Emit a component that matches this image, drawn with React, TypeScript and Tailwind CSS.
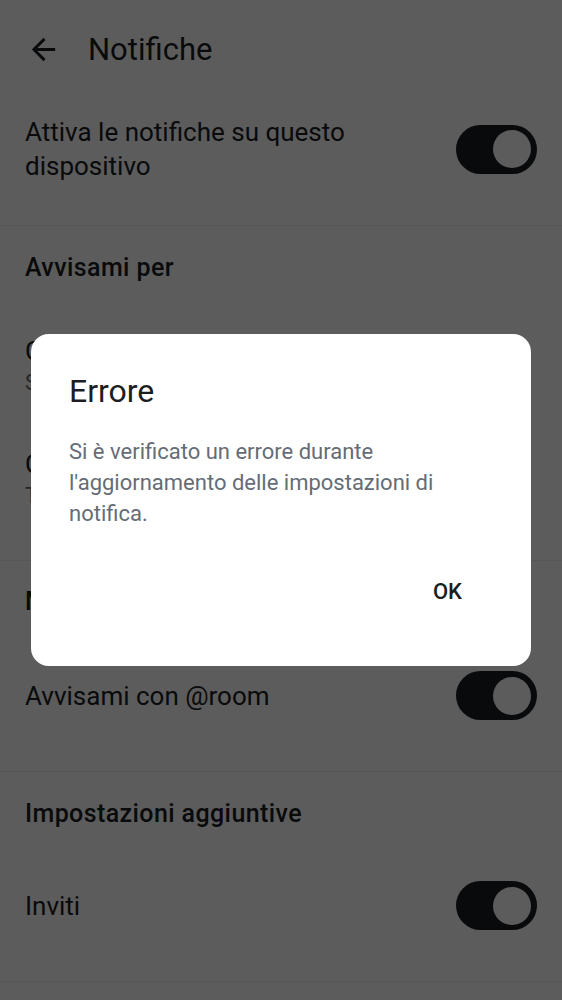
import React from 'react';

const Toggle: React.FC = () => (
  <div className="w-[81px] h-[49px] rounded-full bg-[#1b1d22] flex items-center justify-end pr-[6px] shrink-0">
    <div className="w-[38px] h-[38px] rounded-full bg-white" />
  </div>
);

const Divider: React.FC = () => <div className="h-px bg-[#eeeeee]" />;

const SectionTitle: React.FC<{ children: React.ReactNode; className?: string }> = ({ children, className }) => (
  <div className={`px-[25px] text-[25px] leading-[30px] font-medium tracking-[0.4px] text-[#1b1d22] ${className ?? ''}`}>
    {children}
  </div>
);

export default function App() {
  return (
    <div className="relative w-full h-[1000px] overflow-hidden bg-white font-['Roboto',_sans-serif] text-[#1b1d22]">
      {/* Top bar */}
      <div className="h-[99px] flex items-center pl-[26px]">
        <svg width="35" height="35" viewBox="0 0 24 24" fill="#1b1d22">
          <path d="M20 11H7.83l5.59-5.59L12 4l-8 8 8 8 1.41-1.41L7.83 13H20v-2z" />
        </svg>
        <span className="ml-[27px] text-[31px] leading-[40px]">Notifiche</span>
      </div>

      {/* Enable on device */}
      <div className="flex items-center justify-between pl-[25px] pr-[25px] pt-[16px] pb-[42px]">
        <div className="text-[26px] leading-[34px] max-w-[350px]">Attiva le notifiche su questo dispositivo</div>
        <Toggle />
      </div>
      <Divider />

      {/* Notify me for */}
      <SectionTitle className="pt-[27px]">Avvisami per</SectionTitle>
      <div className="px-[25px] mt-[51px]">
        <div className="text-[26px] leading-[34px]">Chat di gruppo</div>
        <div className="text-[22px] leading-[30px] text-[#656c76]">Solo menzioni e parole chiave</div>
      </div>
      <div className="px-[25px] mt-[49px]">
        <div className="text-[26px] leading-[34px]">Chat dirette</div>
        <div className="text-[22px] leading-[30px] text-[#656c76]">Tutti i messaggi</div>
      </div>
      <div className="mt-[49px]">
        <Divider />
      </div>

      {/* Mentions */}
      <SectionTitle className="pt-[26px]">Menzioni</SectionTitle>
      <div className="flex items-center justify-between px-[25px] mt-[54px]">
        <div className="text-[26px] leading-[34px]">Avvisami con @room</div>
        <Toggle />
      </div>
      <div className="mt-[51px]">
        <Divider />
      </div>

      {/* Additional settings */}
      <SectionTitle className="pt-[27px]">Impostazioni aggiuntive</SectionTitle>
      <div className="flex items-center justify-between px-[25px] mt-[52px]">
        <div className="text-[26px] leading-[34px]">Inviti</div>
        <Toggle />
      </div>
      <div className="mt-[51px]">
        <Divider />
      </div>

      {/* Dialog overlay */}
      <div className="absolute inset-0 bg-black/[0.64] flex items-center justify-center">
        <div className="w-[500px] rounded-[18px] bg-white pt-[37px] pb-[59px] px-[38px]">
          <div className="text-[32px] leading-[40px] text-[#1b1d22]">Errore</div>
          <p className="mt-[25px] text-[22px] leading-[31px] text-[#656c76]">
            Si è verificato un errore durante l'aggiornamento delle impostazioni di notifica.
          </p>
          <div className="mt-[48px] flex justify-end pr-[31px]">
            <span className="text-[22px] leading-[30px] font-medium text-[#1b1d22]">OK</span>
          </div>
        </div>
      </div>
    </div>
  );
}
